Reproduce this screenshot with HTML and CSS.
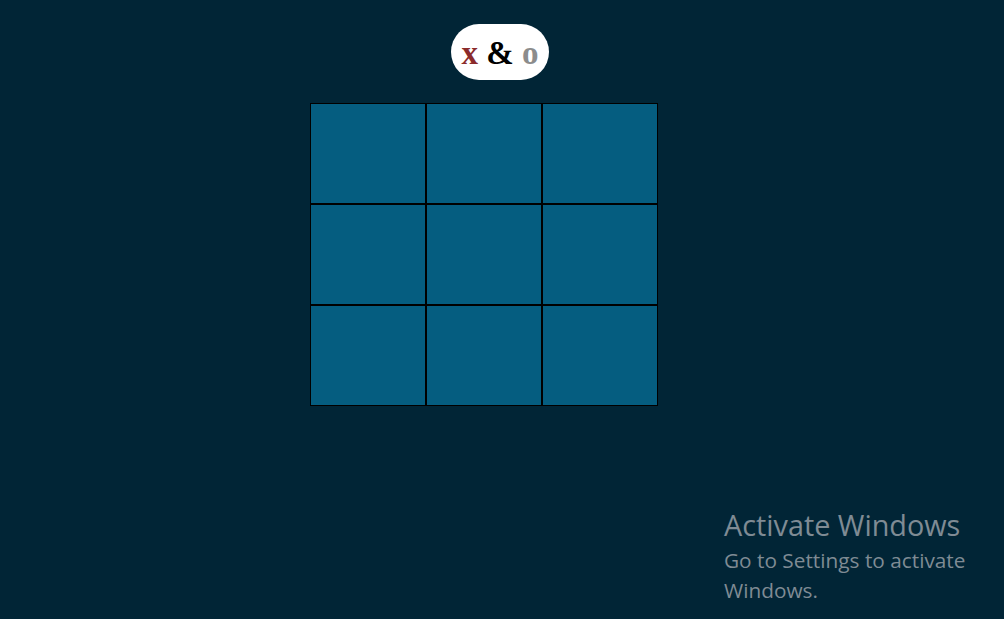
FILE: index.html
```html
<!DOCTYPE html>
<html>
<head>
<meta charset="utf-8">
<link rel="stylesheet" href="styles.css">
</head>
<body>
<main class="page">
  <h1 class="title"><span class="title-text"><span class="x">x</span> <span class="amp">&amp;</span> <span class="o">o</span></span></h1>
  <div class="board-wrap">
    <div class="board">
      <div class="cell"></div><div class="cell"></div><div class="cell"></div>
      <div class="cell"></div><div class="cell"></div><div class="cell"></div>
      <div class="cell"></div><div class="cell"></div><div class="cell"></div>
    </div>
  </div>
</main>
<div class="watermark">
  <div class="wm-title">Activate Windows</div>
  <div class="wm-text">Go to Settings to activate<br>Windows.</div>
</div>
</body>
</html>
```
FILE: styles.css
```css
html, body {
  margin: 0;
  padding: 0;
  height: 100%;
}
body {
  background: #012536;
  overflow: hidden;
}
.page {
  display: flex;
  flex-direction: column;
  align-items: center;
  padding-top: 24px;
}
.title {
  margin: 0 4px 0 0;
  width: 98px;
  height: 56px;
  box-sizing: border-box;
  background: #ffffff;
  border-radius: 28px;
  display: flex;
  align-items: center;
  justify-content: center;
  font-family: "Liberation Serif", "Times New Roman", serif;
  font-weight: bold;
  font-size: 33px;
  line-height: 1;
  color: #000;
}
.title-text {
  white-space: pre;
  padding-top: 2px;
}
.title .x { color: #8b2b2b; }
.title .amp { color: #000000; }
.title .o { color: #8c8c8c; }
.board-wrap {
  margin-top: 23px;
  width: 384px;
}
.board {
  display: grid;
  grid-template-columns: repeat(3, 116px);
  grid-auto-rows: 101px;
}
.cell {
  box-sizing: border-box;
  border: 1px solid #000;
  background: #055d80;
}
.watermark {
  position: absolute;
  left: 724px;
  top: 505px;
  color: #7f8b94;
  font-family: "Open Sans", "Noto Sans", sans-serif;
}
.wm-title {
  font-size: 28.8px;
  line-height: 40px;
}
.wm-text {
  font-size: 20.8px;
  line-height: 30px;
}
```
